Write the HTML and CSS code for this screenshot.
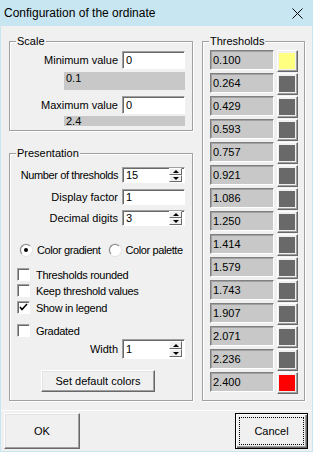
FILE: index.html
```html
<!DOCTYPE html>
<html lang="en">

<head>
    <meta charset="UTF-8">
    <title>Configuration of the ordinate</title>
    <link rel="stylesheet" href="styles.css">
</head>

<body>
    <div class="window">
        <div class="titlebar">
            <span class="title">Configuration of the ordinate</span>
            <svg class="close" width="11" height="11" viewBox="0 0 11 11">
                <path d="M0.5 0.5L10.5 10.5M10.5 0.5L0.5 10.5" stroke="#000" stroke-width="1" fill="none" />
            </svg>
        </div>

        <div class="dialog">
            <div class="columns">
                <div class="left">
                    <div class="group scale">
                        <div class="group-title">Scale</div>
                        <div class="field min"><label>Minimum value</label>
                            <div class="input">0</div>
                        </div>
                        <div class="readout">0.1</div>
                        <div class="field max"><label>Maximum value</label>
                            <div class="input">0</div>
                        </div>
                        <div class="readout short">2.4</div>
                    </div>

                    <div class="group presentation">
                        <div class="group-title">Presentation</div>
                        <div class="field count"><label>Number of thresholds</label>
                            <div class="input spin"><span>15</span><span class="spin-btns"><i class="up"></i><i class="down"></i></span></div>
                        </div>
                        <div class="field factor"><label>Display factor</label>
                            <div class="input small">1</div>
                        </div>
                        <div class="field digits"><label>Decimal digits</label>
                            <div class="input spin"><span>3</span><span class="spin-btns"><i class="up"></i><i class="down"></i></span></div>
                        </div>

                        <div class="radios">
                            <span class="radio checked"></span><span class="radio-label">Color gradient</span>
                            <span class="radio"></span><span class="radio-label">Color palette</span>
                        </div>

                        <div class="check first"><span class="box"></span>Thresholds rounded</div>
                        <div class="check"><span class="box"></span>Keep threshold values</div>
                        <div class="check legend"><span class="box"><svg width="9" height="9" viewBox="0 0 9 9"><path d="M1 4L3 6.5L8 1" stroke="#000" stroke-width="1.6" fill="none" /></svg></span>Show in legend</div>
                        <div class="check gradated"><span class="box"></span>Gradated</div>

                        <div class="field width"><label>Width</label>
                            <div class="input spin tall"><span>1</span><span class="spin-btns"><i class="up"></i><i class="down"></i></span></div>
                        </div>

                        <button class="btn defaults">Set default colors</button>
                    </div>
                </div>

                <div class="group thresholds">
                    <div class="group-title">Thresholds</div>
                    <ul class="threshold-list">
                        <li><span class="value">0.100</span><span class="swatch"><i class="yellow"></i></span></li>
                        <li><span class="value">0.264</span><span class="swatch"><i></i></span></li>
                        <li><span class="value">0.429</span><span class="swatch"><i></i></span></li>
                        <li><span class="value">0.593</span><span class="swatch"><i></i></span></li>
                        <li><span class="value">0.757</span><span class="swatch"><i></i></span></li>
                        <li><span class="value">0.921</span><span class="swatch"><i></i></span></li>
                        <li><span class="value">1.086</span><span class="swatch"><i></i></span></li>
                        <li><span class="value">1.250</span><span class="swatch"><i></i></span></li>
                        <li><span class="value">1.414</span><span class="swatch"><i></i></span></li>
                        <li><span class="value">1.579</span><span class="swatch"><i></i></span></li>
                        <li><span class="value">1.743</span><span class="swatch"><i></i></span></li>
                        <li><span class="value">1.907</span><span class="swatch"><i></i></span></li>
                        <li><span class="value">2.071</span><span class="swatch"><i></i></span></li>
                        <li><span class="value">2.236</span><span class="swatch"><i></i></span></li>
                        <li><span class="value">2.400</span><span class="swatch"><i class="red"></i></span></li>
                    </ul>
                </div>
            </div>

            <div class="footer">
                <button class="btn ok">OK</button>
                <button class="btn cancel"><span class="focus">Cancel</span></button>
            </div>
        </div>
    </div>
</body>

</html>
```

FILE: styles.css
```css
* {
    margin: 0;
    padding: 0;
    box-sizing: border-box;
}

body {
    font-family: "Liberation Sans", Arial, sans-serif;
    font-size: 11px;
    color: #000;
    background: #f0f0f0;
}

.window {
    width: 313px;
    height: 452px;
    display: flex;
    flex-direction: column;
}

/* title bar */
.titlebar {
    flex: none;
    height: 26px;
    background: #c8e6f2;
    display: flex;
    align-items: center;
    justify-content: space-between;
    padding: 0 10px 0 4px;
}

.title {
    font-size: 12px;
}

.dialog {
    flex: 1;
    display: flex;
    flex-direction: column;
    border: 1px solid #c8e6f2;
    border-top: none;
    background: #f0f0f0;
}

.columns {
    display: flex;
    gap: 9px;
    padding: 15px 0 0 8px;
}

.left {
    width: 184px;
    display: flex;
    flex-direction: column;
    gap: 22px;
}

/* group boxes */
.group {
    border: 1px solid #a0a0a0;
    box-shadow: inset 1px 1px #fff, 1px 1px #fff;
    display: flex;
    flex-direction: column;
}

.group-title {
    align-self: flex-start;
    height: 13px;
    line-height: 13px;
    margin: -7px 0 0 6px;
    padding: 0 1px;
    background: #f0f0f0;
}

.scale {
    height: 90px;
}

.presentation {
    height: 248px;
}

.thresholds {
    width: 103px;
    height: 360px;
}

/* label + input rows */
.field {
    display: flex;
    justify-content: flex-end;
    align-items: center;
    gap: 4px;
    padding-right: 7px;
    white-space: nowrap;
}

.count label {
    letter-spacing: -0.4px;
}

.input {
    width: 63px;
    height: 18px;
    background: #fff;
    border: 1px solid;
    border-color: #a0a0a0 #fff #fff #a0a0a0;
    box-shadow: inset 1px 1px #696969;
    padding-left: 3px;
    line-height: 16px;
}

.input.small,
.input.spin {
    height: 16px;
    line-height: 14px;
}

.input.spin.tall {
    height: 20px;
    line-height: 18px;
}

.spin {
    display: flex;
    justify-content: space-between;
    align-items: center;
    padding-right: 2px;
}

.spin-btns {
    display: flex;
    flex-direction: column;
    width: 13px;
}

.spin-btns i {
    height: 7px;
    display: flex;
    align-items: center;
    justify-content: center;
    background: #f0f0f0;
    border: 1px solid;
    border-color: #fff #696969 #696969 #fff;
}

.spin-btns i::after {
    content: '';
    border-left: 3px solid transparent;
    border-right: 3px solid transparent;
}

.spin-btns .up::after {
    border-bottom: 3px solid #000;
}

.spin-btns .down::after {
    border-top: 3px solid #000;
}

.tall .spin-btns i {
    height: 8px;
}

.readout {
    align-self: flex-end;
    width: 121px;
    height: 18px;
    margin: 3px 7px 0 0;
    padding-left: 2px;
    background: #c8c8c8;
    line-height: 13px;
}

.readout.short {
    height: 10px;
    margin-top: 2px;
    line-height: 10px;
    overflow: hidden;
}

.scale .min {
    margin-top: 3px;
}

.scale .max {
    margin-top: 6px;
}

.presentation .count {
    margin-top: 7px;
}

.presentation .factor {
    margin-top: 6px;
}

.presentation .digits {
    margin-top: 5px;
}

/* radios */
.radios {
    display: flex;
    align-items: center;
    height: 13px;
    margin: 17px 0 0 10px;
    white-space: nowrap;
    letter-spacing: -0.4px;
}

.radio {
    flex: none;
    width: 12px;
    height: 12px;
    border-radius: 50%;
    background: #fff;
    border: 1px solid;
    border-color: #808080 #fff #fff #808080;
    box-shadow: 0 0 0 1px #e3e3e3;
    display: flex;
    align-items: center;
    justify-content: center;
}

.radio.checked::after {
    content: '';
    width: 4px;
    height: 4px;
    border-radius: 50%;
    background: #000;
}

.radio-label {
    margin: 0 8px 0 5px;
}

/* checkboxes */
.check {
    display: flex;
    align-items: center;
    gap: 6px;
    height: 13px;
    margin: 3px 0 0 7px;
    white-space: nowrap;
    letter-spacing: -0.3px;
}

.check.first {
    margin-top: 12px;
}

.check.legend {
    margin-top: 4px;
}

.check.gradated {
    margin-top: 10px;
}

.box {
    flex: none;
    width: 13px;
    height: 13px;
    background: #fff;
    border: 1px solid;
    border-color: #a0a0a0 #fff #fff #a0a0a0;
    box-shadow: inset 1px 1px #696969;
    display: flex;
    align-items: center;
    justify-content: center;
}

.presentation .width {
    margin-top: 2px;
}

/* buttons */
.btn {
    font: inherit;
    color: #000;
    background: #f0f0f0;
    border: 1px solid;
    border-color: #fff #696969 #696969 #fff;
    box-shadow: inset -1px -1px #a0a0a0, inset 1px 1px #e3e3e3;
}

.defaults {
    align-self: flex-start;
    width: 114px;
    height: 22px;
    margin: 11px 0 0 31px;
}

/* thresholds list */
.threshold-list {
    list-style: none;
    margin-top: 2px;
    padding-left: 7px;
}

.threshold-list li {
    display: flex;
    align-items: flex-start;
    gap: 3px;
    height: 23px;
}

.value {
    width: 64px;
    height: 20px;
    background: #c8c8c8;
    border: 1px solid;
    border-color: #808080 #fff #fff #808080;
    box-shadow: inset 1px 1px #a0a0a0;
    padding-left: 2px;
    line-height: 18px;
}

.swatch {
    width: 21px;
    height: 22px;
    padding: 2px 2px 2px 1px;
    background: #f0f0f0;
    border: 1px solid;
    border-color: #fff #696969 #696969 #fff;
    box-shadow: inset -1px -1px #a0a0a0;
}

.swatch i {
    display: block;
    width: 16px;
    height: 16px;
    background: #696969;
}

.swatch i.yellow {
    background: #ffff80;
}

.swatch i.red {
    background: #ff0000;
}

/* footer */
.footer {
    display: flex;
    justify-content: space-between;
    margin-top: 9px;
    padding: 2px 4px 0 3px;
    border-top: 1px solid #fff;
}

.ok {
    width: 76px;
    height: 36px;
}

.cancel {
    width: 73px;
    height: 36px;
    padding: 3px;
    border: 1px solid #000;
    box-shadow: inset 1px 1px #fff, inset -1px -1px #696969, inset -2px -2px #a0a0a0;
}

.cancel .focus {
    display: flex;
    align-items: center;
    justify-content: center;
    height: 100%;
    border: 1px dotted #000;
}
```
